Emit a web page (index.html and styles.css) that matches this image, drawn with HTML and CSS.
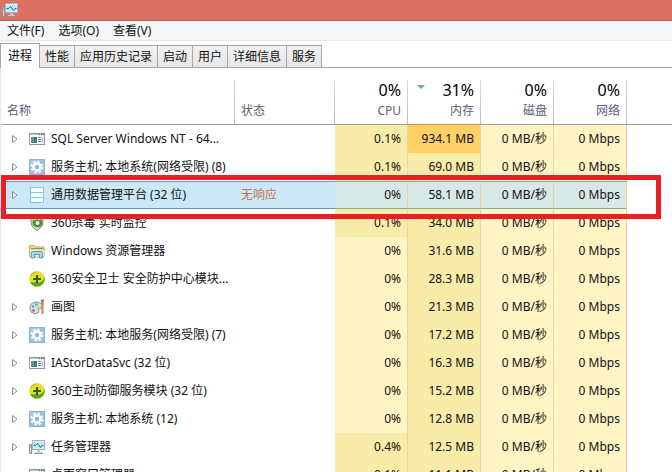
FILE: index.html
```
<!DOCTYPE html>
<html lang="zh-CN">
<head>
    <meta charset="UTF-8">
    <meta name="viewport" content="width=device-width, initial-scale=1.0">
    <title>任务管理器</title>
    <link rel="stylesheet" href="styles.css">
</head>
<body>

    <svg class="sprites" aria-hidden="true">
        <symbol id="monitor" viewBox="0 0 16 16">
            <path d="M0.5 5.5h2v9h-2z" fill="#d8dcde" stroke="#8b9498"/>
            <path d="M1 7h1" stroke="#58a05a"/>
            <rect x="3.5" y="1.5" width="12" height="9" fill="#e9f8fc" stroke="#a3b2b8"/>
            <rect x="4.5" y="2.5" width="10" height="7" fill="#bdeaf6"/>
            <path d="M4.500 6.500h2l2-2 3 4 1.500-2h1.500" fill="none" stroke="#1c6c8c"/>
            <path d="M8 11h3v2h2v2H6v-2h2z" fill="#c5cccf"/>
            <path d="M5 14.500h9" stroke="#8b9498"/>
        </symbol>
        <symbol id="window" viewBox="0 0 16 16">
            <rect x="0.5" y="2.500" width="15" height="11" fill="#fafafa" stroke="#8f989d"/>
            <path d="M1 3.500h14" stroke="#b6bdc2"/>
            <path d="M10 3.500h1m1 0h1m1 0h1" stroke="#59646a"/>
            <rect x="2" y="6" width="6" height="6" fill="#3f7f78"/>
            <path d="M2 11h3V6H2z" fill="#5c93a0"/>
            <path d="M9 6.500h3M9 8.500h3M9 10.500h3" stroke="#76868c"/>
            <path d="M13.500 6v6" stroke="#b8c0c4"/>
        </symbol>
        <symbol id="gear" viewBox="0 0 16 16">
            <rect x="0.500" y="0.500" width="15" height="15" fill="#a9cbea" stroke="#8fb2d3"/>
            <path d="M1 15V8L8 1h7v14z" fill="#9abfe1"/>
            <circle cx="8" cy="8" r="5" fill="none" stroke="#fff" stroke-width="3" stroke-dasharray="2 1.927"/>
            <circle cx="8" cy="8" r="3.500" fill="none" stroke="#fff" stroke-width="2.500"/>
            <circle cx="8" cy="8" r="2" fill="#8fb8dd"/>
        </symbol>
        <symbol id="list" viewBox="0 0 16 16">
            <rect x="1.500" y="0.500" width="13" height="15" fill="#fbfeff" stroke="#7cc7e4"/>
            <path d="M1.500 5.500h13M1.500 10.500h13" stroke="#7cc7e4"/>
        </symbol>
        <symbol id="shield" viewBox="0 0 16 16">
            <path d="M2 2.500q4 0 6-2 2 2 6 2v5q0 5-6 8-6-3-6-8z" fill="#d9dfd9" stroke="#7c8b80"/>
            <circle cx="8.500" cy="7.500" r="5" fill="#40933c"/>
            <path d="M5 5q3-3 6 0" fill="none" stroke="#e3dc4b" stroke-width="2"/>
            <circle cx="8.500" cy="8" r="2" fill="#e8f4df"/>
        </symbol>
        <symbol id="folder" viewBox="0 0 16 16">
            <path d="M0.500 14V2.500h5l1 1.500h8.500v10z" fill="#f0d886" stroke="#c9ab5c"/>
            <path d="M2 5.500h12" stroke="#5faa79"/>
            <path d="M1 7h14v6.500H1z" fill="#fbedb2"/>
            <path d="M2.500 15V9.500q0-1 1-1h9q1 0 1 1V15h-3v-3.500h-5V15z" fill="#a8d7ef" stroke="#599fc7"/>
        </symbol>
        <symbol id="plus" viewBox="0 0 16 16">
            <circle cx="8" cy="8" r="7.700" fill="#f4d91e"/>
            <path d="M1 11A7.700 7.700 0 0 0 15.500 6Q14 12 8 11.500 3 11 1 11z" fill="#54a52c"/>
            <path d="M0.500 7A7.700 7.700 0 0 1 9 0.500Q3 2 0.500 7z" fill="#8fba2c"/>
            <path d="M8 4v8M4 8h8" stroke="#17661f" stroke-width="2"/>
        </symbol>
        <symbol id="paint" viewBox="0 0 16 16">
            <path d="M1 10Q0 4 7 3q6 0 6 5-0 2-3 2-1 1 0 3-2 2-5 1.500Q1.500 14 1 10z" fill="#cfe3ee" stroke="#7698ad"/>
            <circle cx="4" cy="7.500" r="1.300" fill="#4d9cd0"/>
            <circle cx="7.500" cy="5.500" r="1.300" fill="#62ad4b"/>
            <circle cx="4.500" cy="11.500" r="1.300" fill="#d9534a"/>
            <circle cx="9" cy="9" r="1.200" fill="#e8b93d"/>
            <path d="M13.500 5v10" stroke="#d98345" stroke-width="2"/>
            <path d="M11.500 0.500h3.500l-0.500 4.500h-2z" fill="#b57a5a"/>
        </symbol>
        <symbol id="arrow" viewBox="0 0 6 8">
            <path d="M0.500 0.500v7L5 4z" fill="#fff" stroke="#8c8c8c"/>
        </symbol>
    </svg>

    <header class="titlebar">
        <svg class="icon"><use href="#monitor"/></svg>
    </header>

    <nav class="menu">
        <button>文件(F)</button>
        <button>选项(O)</button>
        <button>查看(V)</button>
    </nav>

    <div class="tabs" role="tablist">
        <button class="tab active" role="tab" aria-selected="true">进程</button>
        <button class="tab" role="tab">性能</button>
        <button class="tab" role="tab">应用历史记录</button>
        <button class="tab" role="tab">启动</button>
        <button class="tab" role="tab">用户</button>
        <button class="tab" role="tab">详细信息</button>
        <button class="tab" role="tab">服务</button>
    </div>

    <main class="panel">
        <table class="processes">
            <colgroup>
                <col class="col-name">
                <col class="col-status">
                <col class="col-num">
                <col class="col-num">
                <col class="col-num">
                <col class="col-num">
                <col>
            </colgroup>
            <thead>
                <tr>
                    <th class="text">名称</th>
                    <th class="text">状态</th>
                    <th class="warm"><strong>0%</strong>CPU</th>
                    <th class="sorted"><svg class="sort" viewBox="0 0 8 4"><path d="M0 0h8L4 4z" fill="#6fa9b5"/></svg><strong>31%</strong>内存</th>
                    <th><strong>0%</strong>磁盘</th>
                    <th><strong>0%</strong>网络</th>
                    <th class="rest"></th>
                </tr>
            </thead>
            <tbody>
                <tr>
                    <td><div class="name"><button class="expand" aria-label="展开"><svg><use href="#arrow"/></svg></button><svg class="icon"><use href="#window"/></svg><span>SQL Server Windows NT - 64...</span></div></td>
                    <td></td>
                    <td class="num mid">0.1%</td>
                    <td class="num high">934.1 MB</td>
                    <td class="num">0 MB/秒</td>
                    <td class="num">0 Mbps</td>
                    <td class="rest"></td>
                </tr>
                <tr>
                    <td><div class="name"><button class="expand" aria-label="展开"><svg><use href="#arrow"/></svg></button><svg class="icon"><use href="#gear"/></svg><span>服务主机: 本地系统(网络受限) (8)</span></div></td>
                    <td></td>
                    <td class="num mid">0.1%</td>
                    <td class="num mid">69.0 MB</td>
                    <td class="num">0 MB/秒</td>
                    <td class="num">0 Mbps</td>
                    <td class="rest"></td>
                </tr>
                <tr class="selected">
                    <td><div class="name"><button class="expand" aria-label="展开"><svg><use href="#arrow"/></svg></button><svg class="icon"><use href="#list"/></svg><span>通用数据管理平台 (32 位)</span></div></td>
                    <td class="status">无响应</td>
                    <td class="num">0%</td>
                    <td class="num">58.1 MB</td>
                    <td class="num">0 MB/秒</td>
                    <td class="num">0 Mbps</td>
                    <td class="rest"></td>
                </tr>
                <tr>
                    <td><div class="name"><span class="expand"></span><svg class="icon"><use href="#shield"/></svg><span>360杀毒 实时监控</span></div></td>
                    <td></td>
                    <td class="num mid">0.1%</td>
                    <td class="num mid">34.0 MB</td>
                    <td class="num">0 MB/秒</td>
                    <td class="num">0 Mbps</td>
                    <td class="rest"></td>
                </tr>
                <tr>
                    <td><div class="name"><span class="expand"></span><svg class="icon"><use href="#folder"/></svg><span>Windows 资源管理器</span></div></td>
                    <td></td>
                    <td class="num">0%</td>
                    <td class="num mid">31.6 MB</td>
                    <td class="num">0 MB/秒</td>
                    <td class="num">0 Mbps</td>
                    <td class="rest"></td>
                </tr>
                <tr>
                    <td><div class="name"><span class="expand"></span><svg class="icon"><use href="#plus"/></svg><span>360安全卫士 安全防护中心模块...</span></div></td>
                    <td></td>
                    <td class="num">0%</td>
                    <td class="num mid">28.3 MB</td>
                    <td class="num">0 MB/秒</td>
                    <td class="num">0 Mbps</td>
                    <td class="rest"></td>
                </tr>
                <tr>
                    <td><div class="name"><button class="expand" aria-label="展开"><svg><use href="#arrow"/></svg></button><svg class="icon"><use href="#paint"/></svg><span>画图</span></div></td>
                    <td></td>
                    <td class="num">0%</td>
                    <td class="num mid">21.3 MB</td>
                    <td class="num">0 MB/秒</td>
                    <td class="num">0 Mbps</td>
                    <td class="rest"></td>
                </tr>
                <tr>
                    <td><div class="name"><button class="expand" aria-label="展开"><svg><use href="#arrow"/></svg></button><svg class="icon"><use href="#gear"/></svg><span>服务主机: 本地服务(网络受限) (7)</span></div></td>
                    <td></td>
                    <td class="num">0%</td>
                    <td class="num mid">17.2 MB</td>
                    <td class="num">0 MB/秒</td>
                    <td class="num">0 Mbps</td>
                    <td class="rest"></td>
                </tr>
                <tr>
                    <td><div class="name"><button class="expand" aria-label="展开"><svg><use href="#arrow"/></svg></button><svg class="icon"><use href="#window"/></svg><span>IAStorDataSvc (32 位)</span></div></td>
                    <td></td>
                    <td class="num">0%</td>
                    <td class="num mid">16.3 MB</td>
                    <td class="num">0 MB/秒</td>
                    <td class="num">0 Mbps</td>
                    <td class="rest"></td>
                </tr>
                <tr>
                    <td><div class="name"><button class="expand" aria-label="展开"><svg><use href="#arrow"/></svg></button><svg class="icon"><use href="#plus"/></svg><span>360主动防御服务模块 (32 位)</span></div></td>
                    <td></td>
                    <td class="num">0%</td>
                    <td class="num mid">15.2 MB</td>
                    <td class="num">0 MB/秒</td>
                    <td class="num">0 Mbps</td>
                    <td class="rest"></td>
                </tr>
                <tr>
                    <td><div class="name"><button class="expand" aria-label="展开"><svg><use href="#arrow"/></svg></button><svg class="icon"><use href="#gear"/></svg><span>服务主机: 本地系统 (12)</span></div></td>
                    <td></td>
                    <td class="num">0%</td>
                    <td class="num mid">12.8 MB</td>
                    <td class="num">0 MB/秒</td>
                    <td class="num">0 Mbps</td>
                    <td class="rest"></td>
                </tr>
                <tr>
                    <td><div class="name"><button class="expand" aria-label="展开"><svg><use href="#arrow"/></svg></button><svg class="icon"><use href="#monitor"/></svg><span>任务管理器</span></div></td>
                    <td></td>
                    <td class="num mid">0.4%</td>
                    <td class="num mid">12.5 MB</td>
                    <td class="num">0 MB/秒</td>
                    <td class="num">0 Mbps</td>
                    <td class="rest"></td>
                </tr>
                <tr>
                    <td><div class="name"><span class="expand"></span><svg class="icon"><use href="#window"/></svg><span>桌面窗口管理器</span></div></td>
                    <td></td>
                    <td class="num mid">0.1%</td>
                    <td class="num mid">11.1 MB</td>
                    <td class="num">0 MB/秒</td>
                    <td class="num">0 Mbps</td>
                    <td class="rest"></td>
                </tr>
            </tbody>
        </table>

        <!-- red frame round the process that hangs -->
        <div class="marker"></div>
    </main>

</body>
</html>
```

FILE: styles.css
```
*{
    box-sizing: border-box;
}

html, body{
    height: 100%;
}

body{
    margin: 0;
    overflow: hidden;
    background-color: white;
    color: #111;
    font-family: "Noto Sans", "Noto Sans CJK SC", sans-serif;
    font-size: 12px;
    line-height: 18px;
}

button{
    padding: 0;
    border: none;
    background: none;
    color: inherit;
    font: inherit;
    white-space: nowrap;
}

.sprites{
    display: none;
}

.icon{
    display: block;
    flex: none;
    width: 16px;
    height: 16px;
}

.titlebar{
    height: 21px;
    padding: 2px;
    background-color: #dc7063;
    border-bottom: 1px solid #b5645c;
}

.menu{
    display: flex;
    gap: 14px;
    height: 20px;
    padding-left: 7px;
    background-color: #f5f6f7;
    border-bottom: 1px solid #e6e7e8;
}

/* tabs */
.tabs{
    display: flex;
    align-items: flex-end;
    height: 27px;
    border-bottom: 1px solid #a5a8aa;
}

.tab{
    height: 22px;
    padding: 0 5px;
    background-image: linear-gradient(#f2f2f2, #e6e6e6);
    border: 1px solid #a5a8aa;
    border-left: none;
    border-bottom: none;
}

.tab.active{
    height: 25px;
    margin-bottom: -1px;
    padding: 0 7px;
    background: white;
    border-left: 1px solid #a5a8aa;
}

/* process list */
.panel{
    position: relative;
    border-left: 1px solid #e8e8e8;
}

.processes{
    width: 100%;
    table-layout: fixed;
    border-collapse: separate;
    border-spacing: 0;
}

.col-name{
    width: 234px;
}

.col-status{
    width: 100px;
}

.col-num{
    width: 73px;
}

th{
    position: relative;
    height: 57px;
    padding: 8px 7px 4px 6px;
    background: linear-gradient(#d9dcde, #b9bdc0) right bottom / 1px 44px no-repeat;
    border-bottom: 1px solid #9b9fa2;
    color: #566379;
    font-weight: normal;
    text-align: right;
    vertical-align: bottom;
}

th strong{
    display: block;
    color: black;
    font-size: 16px;
    font-weight: normal;
    line-height: 24px;
}

th.text{
    text-align: left;
}

th.warm{
    border-bottom-color: #a89f7c;
}

th.sorted{
    border-bottom-color: #c09a4c;
}

.sort{
    position: absolute;
    top: 17px;
    left: 9px;
    width: 8px;
    height: 4px;
}

td{
    height: 28px;
    padding: 0 6px 1px 6px;
    white-space: nowrap;
}

.name{
    display: flex;
    align-items: center;
}

.name .icon{
    margin-right: 6px;
}

.expand{
    flex: none;
    width: 22px;
    padding-left: 5px;
}

.expand svg{
    display: block;
    width: 6px;
    height: 8px;
}

.num{
    background-color: #fff4c4;
    border-right: 1px solid #e2d8a5;
    text-align: right;
}

.mid{
    background-color: #f9eca8;
}

.high{
    background-color: #ffd064;
}

.rest{
    background: none;
}

.selected td{
    background-color: #cbe8f6;
    border-top: 1px solid #5d9dbd;
    border-bottom: 1px solid #5d9dbd;
}

.selected .num{
    background-color: #d7e9e6;
    border-top-color: #83aaa2;
    border-bottom-color: #83aaa2;
}

.selected .rest{
    background: none;
    border-color: transparent;
}

.selected .status{
    color: #c9705a;
}

.marker{
    position: absolute;
    top: 107px;
    left: 0;
    right: 11px;
    height: 44px;
    border: 5px solid #e81f26;
}
```
